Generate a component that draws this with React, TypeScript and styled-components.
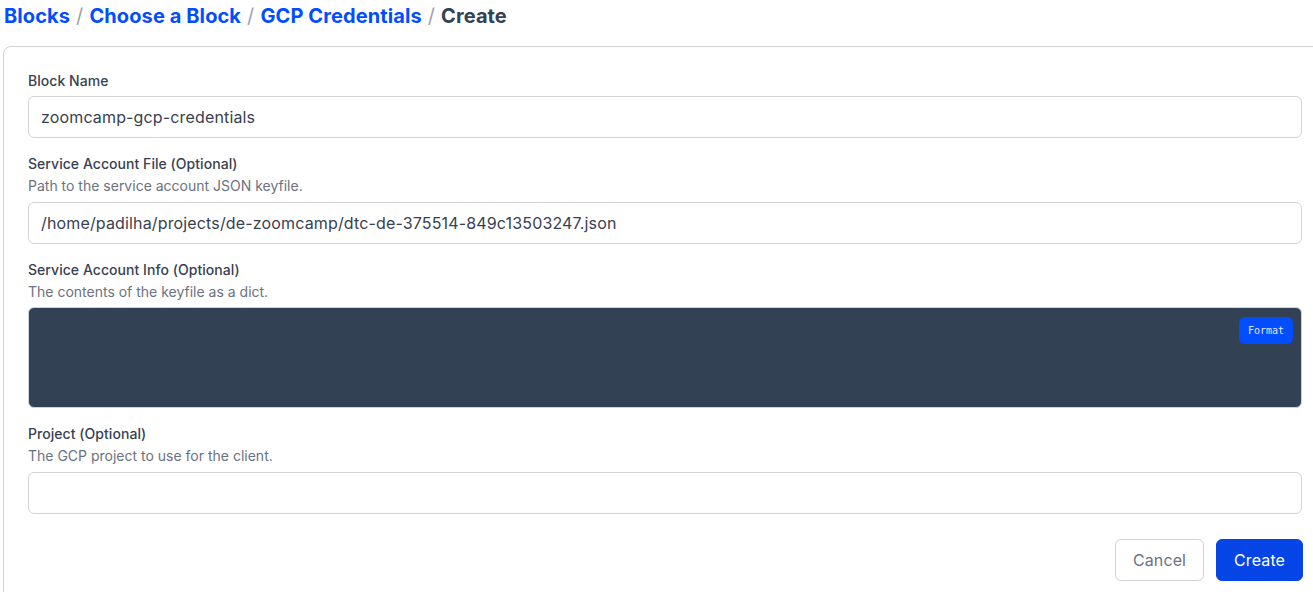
import React from "react";
import styled, { createGlobalStyle } from "styled-components";

const Global = createGlobalStyle`
  html, body { margin: 0; padding: 0; background: #fff; overflow: hidden; }
  body { font-family: Inter, "Noto Sans", sans-serif; color: #374151; }
  * { box-sizing: border-box; }
`;

const Page = styled.div`
  width: 1313px;
  height: 592px;
  overflow: hidden;
  padding: 4px 0 0 3px;
`;

const Breadcrumbs = styled.nav`
  display: flex;
  align-items: center;
  height: 24px;
  padding-left: 1px;
  font-size: 20px;
  font-weight: 700;
  line-height: 24px;
  letter-spacing: 0.1px;
`;

const Crumb = styled.a`
  color: #024dfd;
  text-decoration: none;
`;

const Current = styled.span`
  color: #334155;
`;

const Sep = styled.span`
  color: #9ca3af;
  font-weight: 400;
  margin: 0 6px;
`;

const Card = styled.div`
  margin-top: 18px;
  width: 1324px;
  border: 1px solid #d4d4d8;
  border-radius: 8px;
  padding: 24px;
  display: flex;
  flex-direction: column;
  gap: 16px;
`;

const Field = styled.div`
  display: flex;
  flex-direction: column;
`;

const Label = styled.label`
  font-size: 14px;
  font-weight: 500;
  line-height: 20px;
  color: #374151;
  letter-spacing: 0.05px;
`;

const Description = styled.p`
  margin: 2px 0 0;
  font-size: 14px;
  line-height: 20px;
  color: #6b7280;
`;

const Input = styled.input<{ $top: number }>`
  margin-top: ${(p) => p.$top}px;
  height: 42px;
  width: 100%;
  border: 1px solid #d4d4d8;
  border-radius: 6px;
  padding: 0 12px;
  font-family: Inter, "Noto Sans", sans-serif;
  font-size: 16px;
  letter-spacing: 0.15px;
  color: #374151;
  background: #fff;
  outline: none;
`;

const Editor = styled.div`
  margin-top: 5px;
  position: relative;
  height: 101px;
  background: #334155;
  border: 1px solid #cbd5e1;
  border-radius: 6px;
`;

const FormatButton = styled.button`
  position: absolute;
  top: 9px;
  right: 8px;
  height: 27px;
  padding: 0 9px;
  border: none;
  border-radius: 6px;
  background: #024dfd;
  color: #e0e7ff;
  font-family: "DejaVu Sans Mono", "Liberation Mono", monospace;
  font-size: 10px;
`;

const Actions = styled.div`
  display: flex;
  justify-content: flex-end;
  gap: 12px;
  margin-top: 9px;
  margin-right: -1px;
`;

const Button = styled.button<{ $primary?: boolean }>`
  height: 42px;
  padding: 0 17px;
  border-radius: 6px;
  font-family: Inter, "Noto Sans", sans-serif;
  font-size: 16px;
  letter-spacing: 0.1px;
  border: 1px solid ${(p) => (p.$primary ? "#0545e6" : "#d4d4d8")};
  background: ${(p) => (p.$primary ? "#0545e6" : "#fff")};
  color: ${(p) => (p.$primary ? "#fff" : "#6b7280")};
`;

export default function App() {
  return (
    <>
      <Global />
      <Page>
        <Breadcrumbs>
          <Crumb>Blocks</Crumb>
          <Sep>/</Sep>
          <Crumb>Choose a Block</Crumb>
          <Sep>/</Sep>
          <Crumb>GCP Credentials</Crumb>
          <Sep>/</Sep>
          <Current>Create</Current>
        </Breadcrumbs>
        <Card>
          <Field>
            <Label>Block Name</Label>
            <Input $top={5} defaultValue="zoomcamp-gcp-credentials" />
          </Field>
          <Field>
            <Label>Service Account File (Optional)</Label>
            <Description>Path to the service account JSON keyfile.</Description>
            <Input
              $top={6}
              defaultValue="/home/padilha/projects/de-zoomcamp/dtc-de-375514-849c13503247.json"
            />
          </Field>
          <Field>
            <Label>Service Account Info (Optional)</Label>
            <Description>The contents of the keyfile as a dict.</Description>
            <Editor>
              <FormatButton>Format</FormatButton>
            </Editor>
          </Field>
          <Field>
            <Label>Project (Optional)</Label>
            <Description>The GCP project to use for the client.</Description>
            <Input $top={6} defaultValue="" />
          </Field>
          <Actions>
            <Button>Cancel</Button>
            <Button $primary>Create</Button>
          </Actions>
        </Card>
      </Page>
    </>
  );
}
